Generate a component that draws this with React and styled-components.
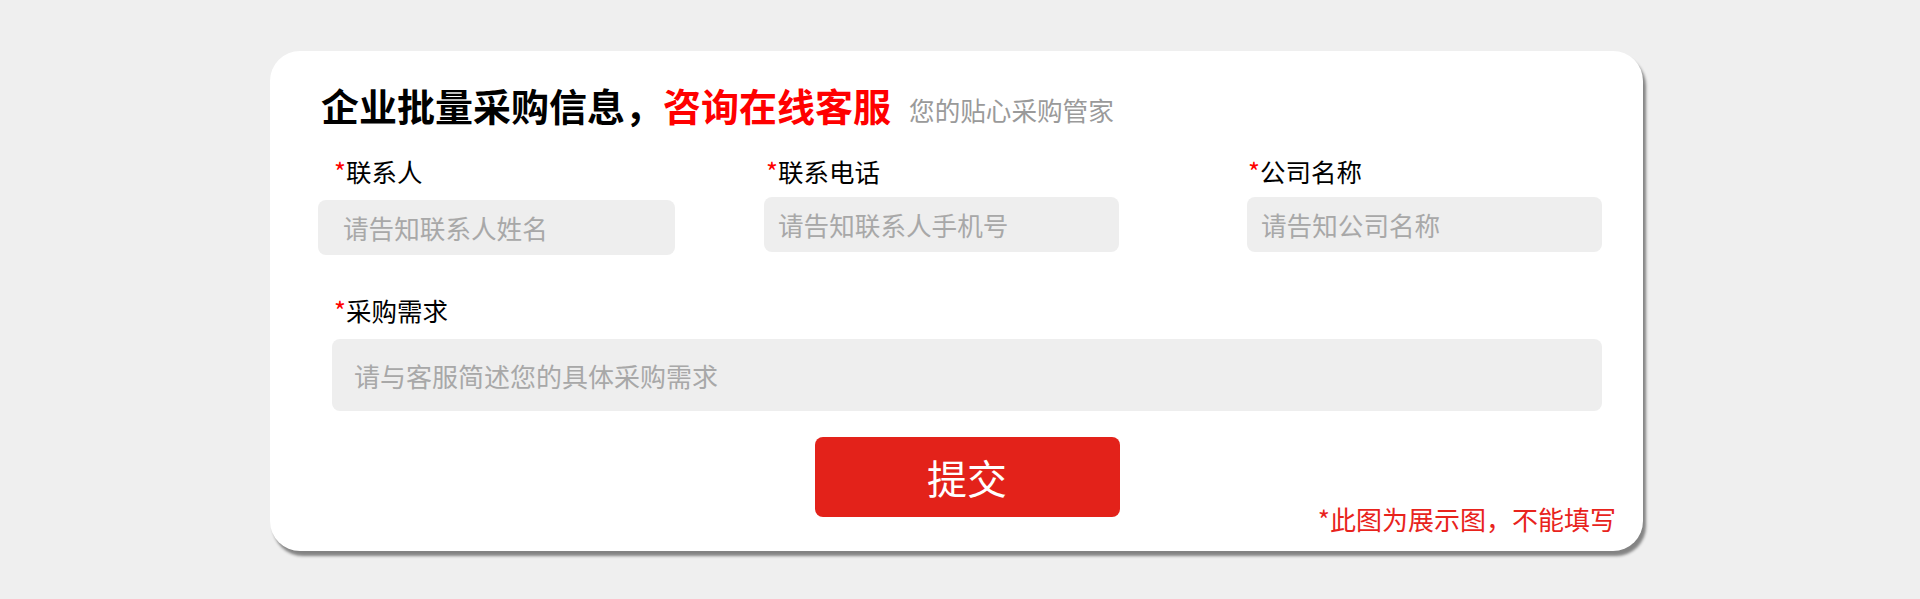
import styled, { createGlobalStyle } from "styled-components";

const GlobalStyle = createGlobalStyle`
  html, body {
    margin: 0;
    padding: 0;
    background: #efefef;
  }
  body {
    font-family: "Noto Sans CJK SC", "Noto Sans", sans-serif;
  }
`;

const Page = styled.div`
  width: 1920px;
  height: 599px;
  padding: 51px 0 0 270px;
  box-sizing: border-box;
`;

const Card = styled.div`
  width: 1373px;
  box-sizing: border-box;
  padding: 32px 41px 17px 48px;
  background: #ffffff;
  border-radius: 30px;
  box-shadow: 3px 5px 3px rgba(0, 0, 0, 0.45);
`;

const Title = styled.div`
  display: flex;
  align-items: baseline;
  height: 44px;
  margin-left: 3px;
  line-height: 44px;
  white-space: nowrap;
`;

const Heading = styled.span`
  font-size: 38px;
  font-weight: 700;
  color: ${(p) => (p.$red ? "#ff0000" : "#000000")};
`;

const Sub = styled.span`
  font-size: 25.6px;
  line-height: 30px;
  color: #9a9a9a;
  margin-left: 18px;
`;

const FieldRow = styled.div`
  display: flex;
  margin-top: 29px;
`;

const Field = styled.div`
  display: flex;
  flex-direction: column;
  width: ${(p) => p.$w}px;
  margin-left: ${(p) => p.$ml || 0}px;
`;

const Label = styled.label`
  display: block;
  font-size: 25.5px;
  line-height: 30px;
  color: #000;
  margin-left: ${(p) => p.$indent || 0}px;
  white-space: nowrap;
`;

const Star = styled.span`
  color: #ff0000;
`;

const Input = styled.input`
  box-sizing: border-box;
  width: 100%;
  height: ${(p) => p.$h || 55}px;
  margin-top: ${(p) => p.$mt || 11}px;
  padding: 0 0 0 ${(p) => p.$pl || 14}px;
  border: none;
  outline: none;
  border-radius: 8px;
  background: #eeeeee;
  font-family: "Noto Sans CJK SC", "Noto Sans", sans-serif;
  font-size: ${(p) => p.$fs || 25.6}px;
  color: #333;

  &::placeholder {
    color: #a8a8a8;
  }
`;

const WideRow = styled.div`
  display: flex;
  flex-direction: column;
  margin: 40px 0 0 14px;
`;

const Footer = styled.div`
  display: grid;
  grid-template-columns: 1fr 305px 1fr;
  margin: 26px -14px 0 0;
  height: 97px;
`;

const SubmitButton = styled.button`
  grid-column: 2;
  align-self: start;
  height: 80px;
  border: none;
  border-radius: 8px;
  background: #e3221a;
  color: #ffffff;
  font-family: "Noto Sans CJK SC", "Noto Sans", sans-serif;
  font-size: 40px;
  cursor: pointer;
`;

const Note = styled.div`
  grid-column: 3;
  justify-self: end;
  align-self: end;
  font-size: 26px;
  line-height: 30px;
  color: #e8231c;
  white-space: nowrap;
`;

const fields = [
  { label: "联系人", ph: "请告知联系人姓名", w: 357, ml: 0, indent: 16, mt: 14, pl: 25 },
  { label: "联系电话", ph: "请告知联系人手机号", w: 355, ml: 89, indent: 2 },
  { label: "公司名称", ph: "请告知公司名称", w: 355, ml: 128, indent: 1 },
];

export default function App() {
  return (
    <Page>
      <GlobalStyle />
      <Card>
        <Title>
          <Heading>企业批量采购信息，</Heading>
          <Heading $red>咨询在线客服</Heading>
          <Sub>您的贴心采购管家</Sub>
        </Title>

        <FieldRow>
          {fields.map((f) => (
            <Field key={f.label} $w={f.w} $ml={f.ml}>
              <Label $indent={f.indent}>
                <Star>*</Star>
                {f.label}
              </Label>
              <Input placeholder={f.ph} $mt={f.mt} $pl={f.pl} readOnly />
            </Field>
          ))}
        </FieldRow>

        <WideRow>
          <Label $indent={2}>
            <Star>*</Star>采购需求
          </Label>
          <Input
            placeholder="请与客服简述您的具体采购需求"
            $h={72}
            $mt={14}
            $pl={22}
            $fs={26}
            readOnly
          />
        </WideRow>

        <Footer>
          <SubmitButton>提交</SubmitButton>
          <Note>*此图为展示图，不能填写</Note>
        </Footer>
      </Card>
    </Page>
  );
}
